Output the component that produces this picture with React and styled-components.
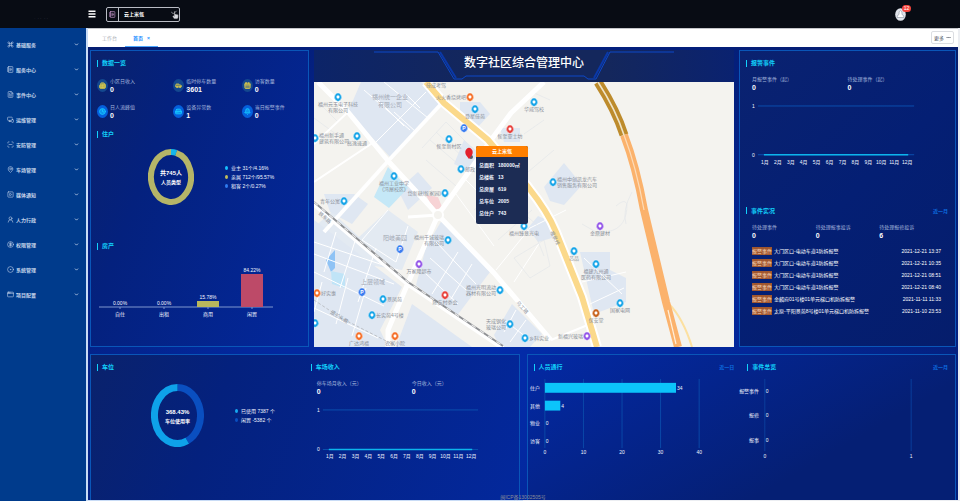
import React, { useState } from "react";
import styled, { createGlobalStyle } from "styled-components";
import {
  AppWindow,
  Bell,
  Building2,
  Calendar,
  Car,
  ChevronDown,
  CircleDot,
  CircleDollarSign,
  Clock,
  Command,
  Ellipsis,
  FileText,
  HardDrive,
  MapPin,
  MonitorSmartphone,
  NotebookText,
  ScanLine,
  SquarePlay,
  UserRound,
} from "lucide-react";

const GlobalStyle = createGlobalStyle`
  * {
    box-sizing: border-box;
  }

  body {
    margin: 0;
    overflow: hidden;
    background: #f0f2f8;
    font-family: "Liberation Sans", "Noto Sans CJK SC", sans-serif;
    font-size: 5px;
    line-height: 8px;
    color: #f2f6ff;
  }

  h1, h2, p, ul, dl, dd {
    margin: 0;
    padding: 0;
  }

  button, select {
    font: inherit;
    color: inherit;
    background: none;
    border: 0;
    padding: 0;
  }

  svg {
    display: block;
    flex: none;
  }
`;

const Page = styled.div`
  min-height: 100vh;
  display: flex;
  flex-direction: column;
`;

const TopBar = styled.header`
  height: 28px;
  display: flex;
  align-items: center;
  background: #080c14;
  padding-right: 54px;
`;

const Brand = styled.div`
  width: 88px;
  padding: 8px 0 0 34px;
  color: #262b35;
`;

const MenuButton = styled.button`
  width: 18px;
`;

const ProjectPicker = styled.label`
  width: 74px;
  height: 15px;
  display: flex;
  align-items: center;
  border: 1px solid #b9bcc4;
  border-radius: 2px;
`;

const PickerIcon = styled.span`
  align-self: stretch;
  display: flex;
  align-items: center;
  padding: 0 2px;
  border-right: 1px solid #b9bcc4;
`;

const PickerSelect = styled.select`
  flex: 1;
  min-width: 0;
  appearance: none;
  padding-left: 5px;
  color: #fff;
  font-weight: 700;
`;

const Account = styled.button`
  margin-left: auto;
  position: relative;
`;

const Badge = styled.span`
  position: absolute;
  left: 7px;
  top: -3px;
  width: 9px;
  height: 7px;
  border-radius: 4px;
  background: #f5453d;
  color: #fff;
  line-height: 7px;
  text-align: center;
`;

const Body = styled.div`
  flex: 1;
  display: flex;
`;

const SideBar = styled.nav`
  width: 86px;
  background: #003b8c;
  padding-top: 4px;
  font-weight: 700;
`;

const SideItem = styled.button`
  width: 100%;
  height: 25px;
  display: flex;
  align-items: center;
  gap: 2px;
  padding: 0 7px;
  color: #c3d3ea;

  svg:last-child {
    margin-left: auto;
  }
`;

const Main = styled.main`
  flex: 1;
  min-width: 0;
  display: flex;
  flex-direction: column;
  padding: 0 2px 1px;
  background: linear-gradient(90deg, #c9dcf6 50%, #eceef2 50%);
`;

const TabBar = styled.div`
  height: 19px;
  display: flex;
  align-items: stretch;
  background: #fff;
  padding: 0 4px 0 6px;
  border-top: 1px solid #c4c6ca;
`;

const Tab = styled.a`
  display: flex;
  align-items: center;
  gap: 4px;
  padding: 0 8px;
  text-decoration: none;
  font-weight: ${({ $active }) => ($active ? 700 : 400)};
  color: ${({ $active }) => ($active ? "#1e90ff" : "#a9adb5")};
  border-bottom: 1px solid ${({ $active }) => ($active ? "#4aa5ff" : "transparent")};
`;

const MoreButton = styled.button`
  margin: 2px 0 3px auto;
  width: 23px;
  display: flex;
  align-items: center;
  justify-content: center;
  gap: 2px;
  border: 1px solid #dcdee2;
  border-radius: 2px;
  color: #444a55;
`;

const Dashboard = styled.section`
  position: relative;
  flex: 1;
  display: flex;
  flex-direction: column;
  gap: 7px;
  padding: 3px 2px 0;
  background: radial-gradient(ellipse at 45% 70%, #032caa 0%, #03279c 35%, #041f7c 75%, #061d6c 100%);
`;

const TopRow = styled.div`
  display: grid;
  grid-template-columns: 219fr 420fr 217fr;
  gap: 5px;
`;

const BottomRow = styled.div`
  flex: 1;
  display: grid;
  grid-template-columns: 1fr 1fr;
  gap: 7px;
`;

const Panel = styled.div`
  min-height: ${({ $tall }) => ($tall ? "297px" : "145px")};
  border: 1px solid #0a56b8;
  border-bottom-width: ${({ $tall }) => ($tall ? "1px" : "0")};
  padding: 7px 6px 0;
  background: ${({ $tone }) =>
    $tone === "dark"
      ? "linear-gradient(135deg, #0a2270, #041f74 50%, #051d6c)"
      : $tone === "fade"
        ? "linear-gradient(150deg, #0329a4, #051f74 70%)"
        : "linear-gradient(110deg, #0a226c, #04217e 30%, #03289c)"};
`;

const Halves = styled(Panel)`
  display: grid;
  grid-template-columns: 1fr 1fr;
  padding: 7px 0 0;

  > div {
    min-width: 0;
    padding: 0 6px;
  }
`;

const Heading = styled.div`
  height: 10px;
  display: flex;
  align-items: center;
  justify-content: space-between;
  margin-top: ${({ $gap = 0 }) => $gap}px;

  h2 {
    font-size: 6px;
    line-height: 10px;
    font-weight: 700;
    color: #12d2fc;
    display: flex;
    align-items: center;
    gap: 4px;
  }

  h2::before {
    content: "";
    width: 1px;
    height: 7px;
    background: #12d2fc;
  }

  a {
    font-size: 5px;
    font-weight: 700;
    color: #0d6ee0;
    text-decoration: none;
    padding-right: 1px;
  }
`;

const Metrics = styled.div`
  display: grid;
  grid-template-columns: 76fr 68fr 60fr;
  grid-auto-rows: 26px;
  margin-top: 4px;
`;

const Metric = styled.div`
  display: flex;
  align-items: center;
  gap: 2px;
`;

const MetricIcon = styled.span`
  width: 11px;
  height: 13px;
  border-radius: 50%;
  display: flex;
  align-items: center;
  justify-content: center;
  background: ${({ $bright }) => ($bright ? "#0560dd" : "#14488f")};
  color: ${({ $bright }) => ($bright ? "#16c8ff" : "#d8c84c")};
`;

const Stat = styled.dl`
  color: #a3b5dc;

  dd {
    font-size: 7px;
    line-height: 9px;
    font-weight: 700;
    color: #fff;
  }
`;

const Stats = styled.div`
  display: grid;
  grid-template-columns: repeat(${({ $cols }) => $cols}, 1fr);
  margin: 7px 6px 0;
`;

const RingRow = styled.div`
  display: flex;
  align-items: center;
  height: ${({ $height }) => $height}px;
  padding-left: ${({ $inset }) => $inset}px;
  gap: 31px;
`;

const Legend = styled.ul`
  list-style: none;

  li {
    display: flex;
    align-items: center;
    gap: 3px;
    height: 9px;
    white-space: nowrap;
  }
`;

const Dot = styled.span`
  width: 3px;
  height: 4px;
  border-radius: 50%;
  background: ${({ $color }) => $color};
`;

const Chart = styled.svg`
  width: 100%;
  height: auto;
  margin-top: ${({ $gap = 0 }) => $gap}px;
  overflow: visible;
  font-size: 5px;
  fill: #f2f6ff;
`;

const Center = styled.div`
  display: flex;
  flex-direction: column;
`;

const TitleBar = styled.div`
  height: 32px;
  display: grid;
  place-items: center;
  background: linear-gradient(90deg, #0c2468, #14275c 40%, #14275c 70%, #0a2270);

  > * {
    grid-area: 1 / 1;
  }

  h1 {
    font-size: 12px;
    line-height: 26px;
    font-weight: 500;
    color: #fff;
    padding-bottom: 6px;
  }
`;

const MapBox = styled.div`
  position: relative;
  height: 265px;
  overflow: hidden;

  > svg {
    width: 100%;
    height: 100%;
  }
`;

const Popup = styled.div`
  position: absolute;
  left: calc(50% - 48px);
  top: 64px;
  width: 52px;
  background: #1c2c54;
  border-radius: 2px;
  overflow: hidden;
  padding-bottom: 5px;
`;

const PopupTitle = styled.p`
  background: #ff7f00;
  color: #fff;
  line-height: 11px;
  font-weight: 700;
  text-align: center;
  margin-bottom: 2px;
`;

const PopupRow = styled.p`
  display: flex;
  gap: 4px;
  padding-left: 3px;
  line-height: 12px;
  white-space: nowrap;
`;

const Events = styled.table`
  width: calc(100% - 14px);
  margin: 5px 0 0 6px;
  border-collapse: collapse;

  td {
    height: 12px;
    padding: 0;
    white-space: nowrap;
    color: #fff;
  }

  td:last-child {
    text-align: right;
  }
`;

const Tag = styled.span`
  display: inline-block;
  width: 20px;
  margin-right: 2px;
  text-align: center;
  background: #a0562e;
  color: #f6d8bd;
`;

const Footer = styled.footer`
  position: absolute;
  left: 0;
  right: 0;
  bottom: -1px;
  text-align: center;
  color: #8b8d98;
`;

const menu = [
  { label: "基础服务", icon: Command },
  { label: "服务中心", icon: NotebookText },
  { label: "事件中心", icon: FileText },
  { label: "运维管理", icon: MonitorSmartphone },
  { label: "安防管理", icon: ScanLine },
  { label: "车场管理", icon: MapPin },
  { label: "媒体通知", icon: SquarePlay },
  { label: "人力行政", icon: UserRound },
  { label: "权限管理", icon: CircleDollarSign },
  { label: "系统管理", icon: CircleDot },
  { label: "项目配置", icon: AppWindow },
];

const metrics = [
  { label: "小区日收入", value: "0", icon: Building2 },
  { label: "临时停车数量", value: "3601", icon: Car },
  { label: "访客数量", value: "0", icon: Calendar },
  { label: "日人流峰值", value: "0", icon: Clock, bright: true },
  { label: "设备异常数", value: "1", icon: HardDrive, bright: true },
  { label: "当日报警事件", value: "0", icon: Bell, bright: true },
];

const events = [
  ["大门区口-电动车道1防拆报警", "2021-12-21 13:37"],
  ["大门区口-电动车道1防拆报警", "2021-12-21 10:35"],
  ["大门区口-电动车道1防拆报警", "2021-12-21 08:51"],
  ["大门区口-电动车道1防拆报警", "2021-12-21 08:40"],
  ["金麟府01号楼01单元梯口机防拆报警", "2021-11-11 11:33"],
  ["太原-平阳景苑8号楼01单元梯口机防拆报警", "2021-11-10 23:53"],
];

const months = Array.from({ length: 12 }, (_, i) => `${i + 1}月`);

const BLUE = "#18a5e8";
const ORANGE = "#f5702a";
const PURPLE = "#9457e8";
const RED = "#e8413c";

// x, y, colour, label side, label lines
const pins = [
  [24, 15, BLUE, "b", "福州元玉电子科技", "有限公司"],
  [43, 54, BLUE, "b", "高逸速通"],
  [135, 57, BLUE, "b", "侯至新村区"],
  [156, 15, ORANGE, "l", "火火香烧烤吧"],
  [161, 27, BLUE, "b", "登星佳苑"],
  [150, 46, "#3b7df0", "p"],
  [196, 47, RED, "b", "侯至亚士坊"],
  [147, 87, BLUE, "r", "邮政"],
  [80, 94, BLUE, "b", "福州工业中学", "(冯屋校区)"],
  [131, 111, BLUE, "l", "岱新糖(侯家园)"],
  [1, 56, BLUE, "r", "福州新手通", "建筑有限公司"],
  [220, 20, BLUE, "b", "华威驾校"],
  [239, 100, BLUE, "r", "福州中创凯龙汽车", "销售服务有限公司"],
  [30, 119, BLUE, "l", "青年公寓"],
  [134, 158, BLUE, "l", "福州千城玻璃", "有限公司"],
  [86, 167, "#3b7df0", "p"],
  [105, 182, PURPLE, "b", "万家隆超市"],
  [48, 210, "#3b7df0", "p"],
  [69, 217, BLUE, "r", "景凤苑"],
  [58, 233, BLUE, "r", "长实苑4号楼"],
  [3, 211, ORANGE, "r", "好实惠"],
  [1, 241, BLUE, "r", ""],
  [45, 254, ORANGE, "b", "广达鸿福"],
  [81, 254, ORANGE, "b", "农家小院"],
  [131, 213, RED, "b", "陈安村委会"],
  [186, 208, BLUE, "l", "福州光明流动", "器材有限公司"],
  [196, 242, BLUE, "l", "天成钢化", "玻璃公司"],
  [211, 256, BLUE, "r", "乡科实业"],
  [210, 144, BLUE, "b", "福州臻意光电"],
  [273, 254, PURPLE, "l", "新福兴玻璃"],
  [282, 231, "#c8641e", "b", "保安堂"],
  [260, 169, BLUE, "b", "芯品"],
  [282, 182, BLUE, "b", "福建九州通", "医药有限公司"],
  [306, 221, BLUE, "b", "国家电网"],
  [286, 144, PURPLE, "b", "金鼎建材"],
];

const Pin = ({ pin }) => {
  const [x, y, color, side, ...lines] = pin;
  const anchor = side === "b" ? "middle" : side === "l" ? "end" : "start";
  const tx = side === "b" ? x : side === "l" ? x - 4 : x + 4;
  const ty = side === "b" ? y + 9 : y + 2 - (lines.length - 1) * 3;
  return (
    <g>
      <path
        d={`M${x} ${y + 4.6}l-2.4 -1.4a3.5 4.2 0 1 1 4.8 0z`}
        fill={color}
        stroke="#fff"
        strokeWidth="0.4"
      />
      {side === "p" ? (
        <text x={x} y={y + 2} textAnchor="middle" fill="#fff" fontWeight="700">
          P
        </text>
      ) : (
        <>
          <rect x={x - 1.4} y={y - 1.4} width="2.8" height="2.8" rx="0.8" fill="#fff" />
          {lines.map((line, i) => (
            <text key={line} x={tx} y={ty + i * 6} textAnchor={anchor}>
              {line}
            </text>
          ))}
        </>
      )}
    </g>
  );
};

const CityMap = () => (
  <svg viewBox="0 0 420 265" preserveAspectRatio="xMidYMid slice" fontSize="5" fill="#8b9099">
    <rect width="420" height="265" fill="#f4f3ef" />
    <g fill="#dfe7f2">
      <path d="M47 0H107L129 20 77 76 34 30z" />
      <path d="M74 128L45 155 18 130 0 145V175L88 188 104 150z" opacity="0.8" />
      <path d="M0 138L88 205 66 248 74 265H0z" />
      <path d="M112 165l16-27 48 52-34 45-40-32z" />
      <path d="M98 222l60 43H82z" />
      <path d="M198 222l30 30-12 13h-30l-6-12z" />
      <path d="M146 20h20l10 12-14 15-16-12z" />
      <path d="M150 58l14 12-6 20-18-8z" />
      <path d="M230 105l20-24 18 22-18 20-14-4z" />
      <path d="M266 170h30v18l16 8v24l-32 12z" />
      <path d="M10 112h30l14 10-16 20-22-12z" />
      <path d="M84 108l20-18 14 16-24 22z" />
      <path d="M214 146l10-12 14 6v16l-14 4z" />
      <path d="M186 46h20v14h-16z" />
    </g>
    <path d="M60 115L74 85 94 106 75 126z" fill="#c5e8f7" />
    <path d="M12 178l9-10v18l-4 4z" fill="#8fc3f5" />
    <path d="M17 189l14 3v14l-13-4z" fill="#c0e4f7" />
    <path d="M112 113l12 2 4 10-8 4z" fill="#f7d3d5" />
    <g fill="none" stroke="#ffffff" strokeWidth="1">
      <path d="M50 8l46 40M62 60l50-50M80 30l22 20M70 0l44 36M60 14l30 30M92 12l14 14" />
      <path d="M0 160l84 28M0 172l80 30M22 150l-12 40M42 156l-16 50M62 166l-18 54M0 190l70 34M8 200l-8 30M34 196l-12 46M52 206l-14 48M0 226l64 30M74 128l-26 30 34 22 12-36" />
      <path d="M116 176l36 32M122 160l40 42M144 170l-26 42M158 182l-24 40M110 190l34 32" />
      <path d="M202 228l-12 22M212 238l-16 22M190 238l26 20M270 176l38 36M268 200l44-10M276 222l34-16" />
      <path d="M182 188l34-42 36-18M152 98l30 30M142 112l38 52M200 200l26-40" />
    </g>
    <g fill="none" stroke="#e4e6ea" strokeWidth="0.7">
      <path d="M174 110l48 44 8 20M160 128l24-20 42 38M170 142l30-26M184 158l34-30M200 176l30-18 6 26-20 12z" />
      <path d="M302 124q14-12 10 8t-30 18l-14-8M196 78l20-12M214 90l26-22M0 36l30 22M4 20l20 20M196 34l22-24 18 8M210 52l20-14" />
      <path d="M112 78l30 26M108 66l24-26 34 34M116 58l28 24M122 50l30 28M318 110q-10 18-6 32" />
    </g>
    <g fill="none" stroke="#fff" strokeLinejoin="round">
      <path d="M4 0L34 30 75 80 124 133 180 191 237 258" strokeWidth="5" />
      <path d="M129 20L75 78 10 150" strokeWidth="4" />
      <path d="M230 0L197 31 177 58 154 91 124 133 110 165 94 201 74 248V265" strokeWidth="5" />
      <path d="M237 258l44-18M60 60L0 100M34 30L0 62" strokeWidth="2" />
      <path d="M106 110l18 23-30 2" strokeWidth="3" />
    </g>
    <circle cx="124" cy="133" r="5" fill="#f4f3ef" stroke="#fff" strokeWidth="2" />
    <path d="M112 0L130 21 174 58 214 105Q234 130 242 150T268 215L283 265" fill="none" stroke="#fff" strokeWidth="10" />
    <path d="M112 0L130 21 174 58 214 105Q234 130 242 150T268 215L283 265" fill="none" stroke="#fbd98b" strokeWidth="6" />
    <path d="M0 122L94 202 189 266" fill="none" stroke="#fff" strokeWidth="5" />
    <path d="M0 120L94 200 189 264" fill="none" stroke="#8f9194" strokeWidth="2" />
    <path d="M0 120L94 200 189 264" fill="none" stroke="#e6e6e6" strokeWidth="1.2" strokeDasharray="5 5" />
    <path d="M0 218L27 236 84 265" fill="none" stroke="#b4b6ba" strokeWidth="0.8" strokeDasharray="3 2" />
    <path d="M355 222q14 14 23 43" fill="none" stroke="#fce0a0" strokeWidth="2" />
    <path d="M284 0Q302 28 310 53" fill="none" stroke="#bd8b2c" strokeWidth="9" />
    <path d="M310 53Q322 84 330 128L352 220 364 265" fill="none" stroke="#fbb26c" strokeWidth="8" />
    <path d="M284 0Q302 28 310 53" fill="none" stroke="#efe4c8" strokeWidth="1.6" />
    <path d="M310 53Q322 84 330 128" fill="none" stroke="#fddcb8" strokeWidth="1.2" />
    <path d="M354 228L362 262" fill="none" stroke="#fff0dc" strokeWidth="1.2" />
    <g fontSize="6" fill="#a3a9b5" textAnchor="middle">
      <text x="76" y="17">福州统一企业</text>
      <text x="76" y="25">有限公司</text>
      <text x="81" y="158">阳岐美园</text>
      <text x="59" y="202">上层领域</text>
    </g>
    <text x="236" y="150" transform="rotate(63 236 150)">福泉线</text>
    <text x="202" y="221" transform="rotate(48 202 221)">乌工路</text>
    <text x="4" y="132" transform="rotate(42 4 132)">铁东路</text>
    <text x="16" y="231" transform="rotate(32 16 231)">盛兰头路</text>
    <text x="122" y="5" textAnchor="middle">佳成考驾</text>
    {pins.map((pin, i) => (
      <Pin key={i} pin={pin} />
    ))}
    <ellipse cx="157" cy="75" rx="2" ry="2" fill="#5a5f6a" />
    <path d="M155 77l-3-4a3.6 4.6 0 1 1 6 0z" fill="#e3202c" />
  </svg>
);

// arc of an elliptical ring, angles in turns clockwise from the top
const arc = (rx, ry, from, to) => {
  const point = (t) =>
    `${rx * Math.sin(t * 2 * Math.PI)} ${-ry * Math.cos(t * 2 * Math.PI)}`;
  return `M${point(from)}A${rx} ${ry} 0 ${to - from > 0.5 ? 1 : 0} 1 ${point(to)}`;
};

const Ring = ({ rx, ry, thick, parts, value, label }) => {
  const w = rx + thick / 2;
  const h = ry + thick / 2;
  return (
    <svg width={w * 2} height={h * 2} viewBox={`${-w} ${-h} ${w * 2} ${h * 2}`} fill="#fff" textAnchor="middle">
      {parts.map(([from, to, color]) => (
        <path key={color} d={arc(rx, ry, from, to)} fill="none" stroke={color} strokeWidth={thick} />
      ))}
      <text y="-2" fontSize="6" fontWeight="700">{value}</text>
      <text y="7" fontSize="5" fontWeight="700">{label}</text>
    </svg>
  );
};

const MonthChart = ({ height }) => (
  <Chart $gap={8} viewBox={`0 0 204 ${height + 20}`}>
    <path d="M12 6H169" stroke="#0b4fae" strokeWidth="1" />
    <path d={`M12 ${height + 6}H169`} stroke="#0b4fae" strokeWidth="1" />
    <path d={`M18 ${height + 6}H163`} stroke="#0cb4ec" strokeWidth="1.6" />
    <text x="6" y="8">1</text>
    <text x="6" y={height + 8}>0</text>
    {months.map((month, i) => (
      <text key={month} x={19 + i * 13} y={height + 15} textAnchor="middle">
        {month}
      </text>
    ))}
  </Chart>
);

const Section = ({ title, link, gap }) => (
  <Heading $gap={gap}>
    <h2>{title}</h2>
    {link && <a href="#more">{link}</a>}
  </Heading>
);

const StatItem = ({ label, value }) => (
  <Stat>
    <dt>{label}</dt>
    <dd>{value}</dd>
  </Stat>
);

const houses = [
  ["自住", "0.00%", 0, "#b9b75c"],
  ["出租", "0.00%", 0, "#b9b75c"],
  ["商用", "15.78%", 6, "#b9b75c"],
  ["闲置", "84.22%", 33, "#bd4a68"],
];

const passes = [
  ["住户", 34],
  ["其他", 4],
  ["物业", 0],
  ["访客", 0],
];

const App = () => {
  const [project, setProject] = useState("云上米瓴");

  return (
    <Page>
      <GlobalStyle />
      <TopBar>
        <Brand>· ‥ ‥</Brand>
        <MenuButton aria-label="菜单">
          <svg width="8" height="8" viewBox="0 0 8 8" stroke="#fff" strokeWidth="1.4">
            <path d="M0.5 1.2h7M0.5 4h7M0.5 6.8h7" />
          </svg>
        </MenuButton>
        <ProjectPicker>
          <PickerIcon>
            <NotebookText size={7} color="#d9a4dc" />
          </PickerIcon>
          <PickerSelect
            aria-label="项目"
            value={project}
            onChange={(e) => setProject(e.target.value)}
          >
            <option>云上米瓴</option>
          </PickerSelect>
          <svg width="8" height="12" viewBox="0 0 10 12">
            <path d="M0 3l3 3 4-4" fill="none" stroke="#8d9099" strokeWidth="1.2" />
            <path d="M4 3l1 0 0 3 4 1 0 3-1 2H4L2 9l1-1 1 1z" fill="#d9dbe0" stroke="#555" strokeWidth="0.4" />
          </svg>
        </ProjectPicker>
        <Account aria-label="账号">
          <svg width="11" height="13" viewBox="0 0 11 13">
            <ellipse cx="5.5" cy="6.5" rx="5.3" ry="6.3" fill="#dfe3ea" />
            <path d="M2 9.5q0-2.5 2-3Q3.500 3 5.500 2.600 7.500 3 7 6.500q2 .5 2 3z" fill="#fff" stroke="#9aa1ad" strokeWidth="0.7" />
          </svg>
          <Badge>12</Badge>
        </Account>
      </TopBar>
      <Body>
        <SideBar>
          {menu.map(({ label, icon: Icon }) => (
            <SideItem key={label}>
              <Icon size={7} strokeWidth={2} />
              <span>{label}</span>
              <ChevronDown size={5} strokeWidth={4} />
            </SideItem>
          ))}
        </SideBar>
        <Main>
          <TabBar>
            <Tab href="#work">工作台</Tab>
            <Tab href="#home" $active>
              首页 <span>×</span>
            </Tab>
            <MoreButton>
              更多 <Ellipsis size={5} />
            </MoreButton>
          </TabBar>
          <Dashboard>
            <TopRow>
              <Panel $tall>
                <Section title="数据一览" />
                <Metrics>
                  {metrics.map(({ label, value, icon: Icon, bright }) => (
                    <Metric key={label}>
                      <MetricIcon $bright={bright}>
                        <Icon size={7} strokeWidth={3} fill="currentColor" fillOpacity={0.5} />
                      </MetricIcon>
                      <StatItem label={label} value={value} />
                    </Metric>
                  ))}
                </Metrics>
                <Section title="住户" gap={5} />
                <RingRow $height={76} $inset={51}>
                  <Ring
                    rx={20}
                    ry={25}
                    thick={6}
                    parts={[
                      [0.04, 1, "#b5b568"],
                      [0, 0.0416, "#16b6ea"],
                    ]}
                    value="共745人"
                    label="人员类型"
                  />
                  <Legend>
                    <li><Dot $color="#16c0ff" />业主 31个/4.16%</li>
                    <li><Dot $color="#c0bc5c" />亲属 712个/95.57%</li>
                    <li><Dot $color="#2f7cf0" />租客 2个/0.27%</li>
                  </Legend>
                </RingRow>
                <Section title="房产" gap={26} />
                <Chart viewBox="0 0 205 88" textAnchor="middle">
                  <path d="M2 56H176" stroke="#7f97cf" strokeWidth="1" />
                  {houses.map(([name, share, height, color], i) => (
                    <g key={name}>
                      <rect x={12 + i * 44} y={56 - height} width="22" height={height} fill={color} />
                      <path d={`M${23 + i * 44} 56v2`} stroke="#7f97cf" strokeWidth="1" />
                      <text x={23 + i * 44} y={54 - height}>{share}</text>
                      <text x={23 + i * 44} y="65">{name}</text>
                    </g>
                  ))}
                </Chart>
              </Panel>
              <Center>
                <TitleBar>
                  <svg width="100%" height="32" viewBox="0 0 420 32" fill="none" stroke="#0c48c8">
                    <path d="M60 2H124L140 29H148L152 26H270L274 29H282L296 2H360" strokeWidth="1" />
                    <path d="M126 2L142 28M294 2L280 28" stroke="#0a38a8" strokeWidth="2" />
                  </svg>
                  <h1>数字社区综合管理中心</h1>
                </TitleBar>
                <MapBox>
                  <CityMap />
                  <Popup>
                    <PopupTitle>云上米瓴</PopupTitle>
                    <PopupRow><b>总面积</b><b>180000㎡</b></PopupRow>
                    <PopupRow><b>总楼栋</b><b>13</b></PopupRow>
                    <PopupRow><b>总房屋</b><b>619</b></PopupRow>
                    <PopupRow><b>总车位</b><b>2005</b></PopupRow>
                    <PopupRow><b>总住户</b><b>743</b></PopupRow>
                  </Popup>
                </MapBox>
              </Center>
              <Panel $tall $tone="dark">
                <Section title="报警事件" />
                <Stats $cols={2}>
                  <StatItem label="月报警事件（起）" value="0" />
                  <StatItem label="待处理事件（起）" value="0" />
                </Stats>
                <MonthChart height={49} />
                <Section title="事件实况" link="近一月" gap={37} />
                <Stats $cols={3}>
                  <StatItem label="待处理事件" value="0" />
                  <StatItem label="待处理报事投诉" value="0" />
                  <StatItem label="待处理报修投诉" value="6" />
                </Stats>
                <Events>
                  <tbody>
                    {events.map(([text, time]) => (
                      <tr key={time}>
                        <td><Tag>报警事件</Tag>{text}</td>
                        <td>{time}</td>
                      </tr>
                    ))}
                  </tbody>
                </Events>
              </Panel>
            </TopRow>
            <BottomRow>
              <Halves>
                <div>
                  <Section title="车位" />
                  <RingRow $height={86} $inset={54}>
                    <Ring
                      rx={23}
                      ry={28}
                      thick={7}
                      parts={[
                        [0, 0.43, "#0a4fc0"],
                        [0.43, 1, "#0ea2ea"],
                      ]}
                      value="368.43%"
                      label="车位使用率"
                    />
                    <Legend>
                      <li><Dot $color="#16a8f0" />已使用 7387 个</li>
                      <li><Dot $color="#0a4fc0" />闲置 -5382 个</li>
                    </Legend>
                  </RingRow>
                </div>
                <div>
                  <Section title="车场收入" />
                  <Stats $cols={2}>
                    <StatItem label="停车场月收入（元）" value="0" />
                    <StatItem label="今日收入（元）" value="0" />
                  </Stats>
                  <MonthChart height={40} />
                </div>
              </Halves>
              <Halves $tone="fade">
                <div>
                  <Section title="人员通行" link="近一日" />
                  <Chart viewBox="0 0 204 100">
                    {[0, 1, 2, 3, 4].map((n) => (
                      <g key={n} textAnchor="middle">
                        <path d={`M${11 + n * 39} 7V77`} stroke="#0a49a8" strokeWidth="1" />
                        <text x={11 + n * 39} y="83">{n * 10}</text>
                      </g>
                    ))}
                    {passes.map(([name, count], i) => (
                      <g key={name}>
                        <text x="6" y={18 + i * 18} textAnchor="end">{name}</text>
                        <rect x="11" y={11 + i * 18} width={count * 3.9} height="10" fill="#0cc4fa" />
                        <text x={12 + count * 3.9} y={18 + i * 18}>{count}</text>
                      </g>
                    ))}
                  </Chart>
                </div>
                <div>
                  <Section title="事件总览" link="近一月" />
                  <Chart viewBox="0 0 204 100">
                    <path d="M18 7V80M166 7V80" stroke="#0a3f9c" strokeWidth="1" />
                    {["报警事件", "报修", "报事"].map((name, i) => (
                      <g key={name}>
                        <text x="12" y={21 + i * 25} textAnchor="end">{name}</text>
                        <text x="19" y={21 + i * 25}>0</text>
                      </g>
                    ))}
                    <text x="18" y="87" textAnchor="middle">0</text>
                    <text x="166" y="87" textAnchor="middle">1</text>
                  </Chart>
                </div>
              </Halves>
            </BottomRow>
            <Footer>闽ICP备13002505号</Footer>
          </Dashboard>
        </Main>
      </Body>
    </Page>
  );
};

export default App;
